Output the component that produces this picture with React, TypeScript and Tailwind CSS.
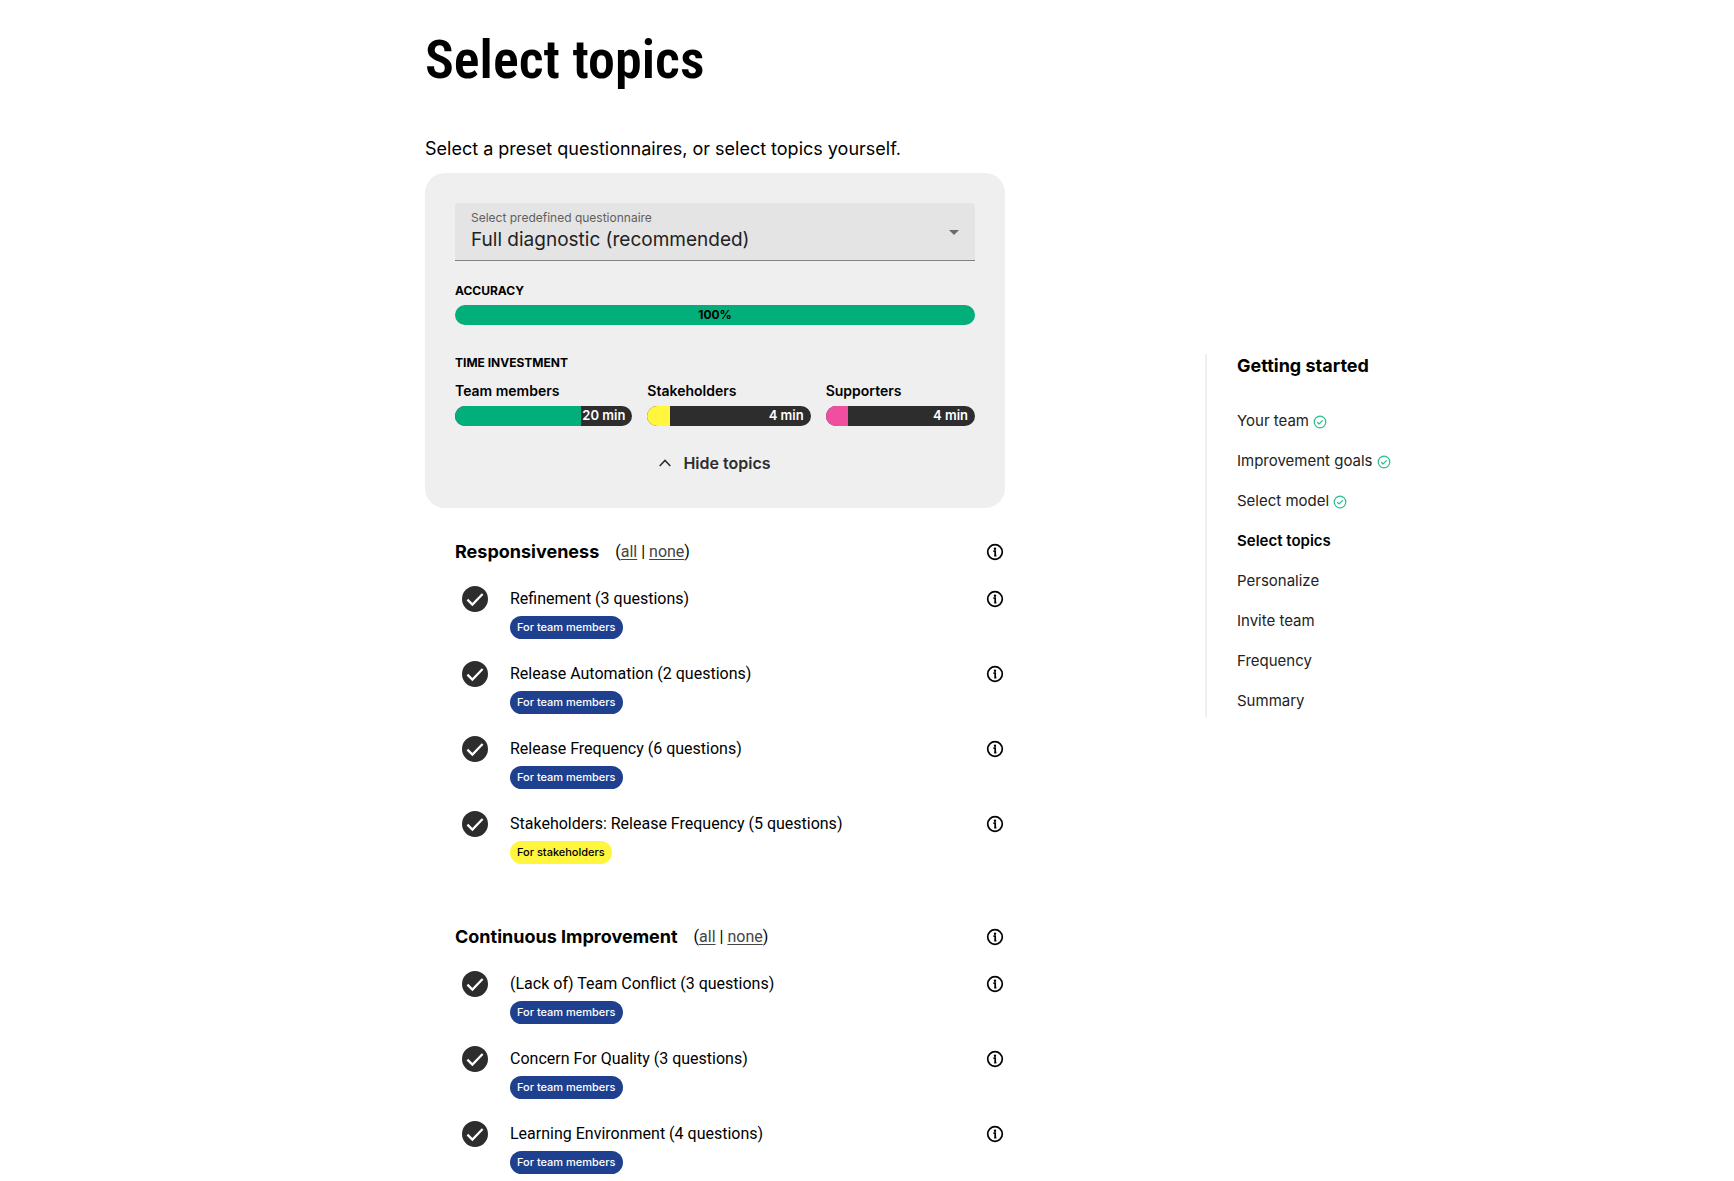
import { useId, useState } from "react";

type Audience = "team" | "stakeholders";
type Topic = { name: string; questions: number; audience: Audience };
type Section = { title: string; topics: Topic[] };

const sections: Section[] = [
  {
    title: "Responsiveness",
    topics: [
      { name: "Refinement", questions: 3, audience: "team" },
      { name: "Release Automation", questions: 2, audience: "team" },
      { name: "Release Frequency", questions: 6, audience: "team" },
      { name: "Stakeholders: Release Frequency", questions: 5, audience: "stakeholders" },
    ],
  },
  {
    title: "Continuous Improvement",
    topics: [
      { name: "(Lack of) Team Conflict", questions: 3, audience: "team" },
      { name: "Concern For Quality", questions: 3, audience: "team" },
      { name: "Learning Environment", questions: 4, audience: "team" },
    ],
  },
];

const steps = [
  { name: "Your team", done: true },
  { name: "Improvement goals", done: true },
  { name: "Select model", done: true },
  { name: "Select topics", current: true },
  { name: "Personalize" },
  { name: "Invite team" },
  { name: "Frequency" },
  { name: "Summary" },
];

const investments = [
  { name: "Team members", minutes: 20, percent: 71, fill: "bg-[#02ae7a]" },
  { name: "Stakeholders", minutes: 4, percent: 14, fill: "bg-[#fff63d]" },
  { name: "Supporters", minutes: 4, percent: 15, fill: "bg-[#f04e9f]" },
];

function InfoButton({ label }: { label: string }) {
  return (
    <button type="button" aria-label={`About ${label}`} className="size-5 shrink-0">
      <svg viewBox="0 0 20 20" className="size-5" fill="none">
        <circle cx="10" cy="10" r="7.3" stroke="black" strokeWidth="1.7" />
        <circle cx="10" cy="6.7" r="1.2" fill="black" />
        <path d="M8.4 9.2h1.8v4.8M9.2 13.6h2.2" stroke="black" strokeWidth="1.7" />
      </svg>
    </button>
  );
}

function DoneIcon() {
  return (
    <svg viewBox="0 0 14 14" className="mt-0.5 size-3.5" fill="none" stroke="#2bbd8c">
      <circle cx="7" cy="7" r="5.8" strokeWidth="1.2" />
      <path d="M4.3 7.2l1.8 1.7 3.6-3.5" strokeWidth="1.3" />
    </svg>
  );
}

function TopicRow({ topic }: { topic: Topic }) {
  const id = useId();
  const [checked, setChecked] = useState(true);
  return (
    <li className="flex h-[75px] items-start">
      <span className="relative ml-[7px] mt-px size-[26px] shrink-0">
        <input
          id={id}
          type="checkbox"
          checked={checked}
          onChange={(e) => setChecked(e.target.checked)}
          className="peer block size-[26px] appearance-none rounded-full border-2 border-[#2d2d2d] checked:bg-[#2d2d2d]"
        />
        <svg
          viewBox="0 0 26 26"
          className="pointer-events-none absolute inset-0 hidden peer-checked:block"
          fill="none"
          stroke="white"
          strokeWidth="2.2"
        >
          <path d="M5.4 13.6l5 5L20.6 8" />
        </svg>
      </span>
      <div className="ml-[22px] flex-1">
        <label htmlFor={id} className="block font-['Roboto',sans-serif] text-base leading-7 text-black">
          {topic.name} ({topic.questions} questions)
        </label>
        {topic.audience === "team" ? (
          <span className="mt-[3px] flex h-[23px] w-fit items-center rounded-full bg-[#1f3f8f] px-[7px] text-[11px] font-medium text-white">
            For team members
          </span>
        ) : (
          <span className="mt-[3px] flex h-[23px] w-fit items-center rounded-full bg-[#fff63d] px-[7px] text-[11px] font-medium text-black">
            For stakeholders
          </span>
        )}
      </div>
      <div className="mt-1">
        <InfoButton label={topic.name} />
      </div>
    </li>
  );
}

function TopicSection({ section }: { section: Section }) {
  return (
    <section className="mb-10 pl-[30px]">
      <div className="flex h-6 items-center">
        <h2 className="text-lg font-bold text-black">{section.title}</h2>
        <p className="ml-4 flex-1 font-['Roboto',sans-serif] text-base text-black">
          (
          <a href="#all" className="text-[#444] underline underline-offset-2">all</a>
          {" | "}
          <a href="#none" className="text-[#444] underline underline-offset-2">none</a>
          )
        </p>
        <InfoButton label={section.title} />
      </div>
      <ul className="mt-[21px]">
        {section.topics.map((topic) => (
          <TopicRow key={topic.name} topic={topic} />
        ))}
      </ul>
    </section>
  );
}

export default function App() {
  return (
    <div className="grid min-h-screen grid-cols-[425fr_580px_200px_529fr] bg-white font-['Inter',sans-serif] text-black">
      <main className="col-start-2">
        <h1 className="mt-6 font-['Roboto_Condensed','Liberation_Sans_Narrow',sans-serif] text-[54px] font-semibold leading-[72px]">
          Select topics
        </h1>
        <p className="mt-[41px] text-lg leading-6">
          Select a preset questionnaires, or select topics yourself.
        </p>

        <div className="mt-3 rounded-[20px] bg-[#efefef] p-[30px]">
          <div className="relative">
            <label
              htmlFor="preset"
              className="pointer-events-none absolute left-4 top-[7px] text-xs leading-4 text-[#5f5f5f]"
            >
              Select predefined questionnaire
            </label>
            <select
              id="preset"
              className="block h-[58px] w-full appearance-none rounded-t border-b border-[#838383] bg-[#e4e4e4] pl-4 pr-10 pt-[18px] text-[19px] text-[#222]"
            >
              <option>Full diagnostic (recommended)</option>
            </select>
            <svg
              viewBox="0 0 10 5"
              className="pointer-events-none absolute right-4 top-[27px] h-[5px] w-2.5"
              fill="#6b6b6b"
            >
              <path d="M0 0h10L5 5z" />
            </svg>
          </div>

          <h3 className="mt-[21px] text-xs font-bold leading-[18px]">ACCURACY</h3>
          <div className="mt-[5px] flex h-5 items-center justify-center rounded-full bg-[#02ae7a] text-xs font-bold">
            100%
          </div>

          <h3 className="mt-[29px] text-xs font-bold leading-[18px]">TIME INVESTMENT</h3>
          <div className="mt-[9px] grid grid-cols-[177fr_163fr_149fr] gap-[15px]">
            {investments.map((item) => (
              <div key={item.name} className="min-w-0">
                <h4 className="text-sm font-semibold leading-5">{item.name}</h4>
                <div className="relative mt-[5px] flex h-5 items-center justify-end overflow-hidden rounded-full bg-[#2d2d2d] pr-[7px]">
                  <span
                    className={`absolute inset-y-0 left-0 ${item.fill}`}
                    style={{ width: `${item.percent}%` }}
                  />
                  <span className="relative text-[13px] font-semibold text-white">
                    {item.minutes} min
                  </span>
                </div>
              </div>
            ))}
          </div>

          <button
            type="button"
            className="mx-auto mb-[3px] mt-[25px] flex h-6 items-center gap-3 text-base font-semibold text-[#2d2d2d]"
          >
            <svg viewBox="0 0 12 8" className="h-2 w-3" fill="none" stroke="#2d2d2d" strokeWidth="1.5">
              <path d="M0.7 7L6 1.4 11.3 7" />
            </svg>
            Hide topics
          </button>
        </div>

        <div className="mt-8">
          {sections.map((section) => (
            <TopicSection key={section.title} section={section} />
          ))}
        </div>
      </main>

      <nav
        aria-labelledby="steps-title"
        className="col-start-4 mt-[354px] self-start border-l-2 border-[#efefef] pl-[30px]"
      >
        <h2 id="steps-title" className="text-lg font-bold leading-6">
          Getting started
        </h2>
        <ul className="mt-[27px] flex flex-col gap-2">
          {steps.map((step) => (
            <li key={step.name} className="flex h-8 items-center gap-1 text-[15px]">
              <a
                href="#step"
                aria-current={step.current ? "step" : undefined}
                className={step.current ? "font-semibold text-black" : "text-[#222]"}
              >
                {step.name}
              </a>
              {step.done && <DoneIcon />}
            </li>
          ))}
        </ul>
      </nav>
    </div>
  );
}
